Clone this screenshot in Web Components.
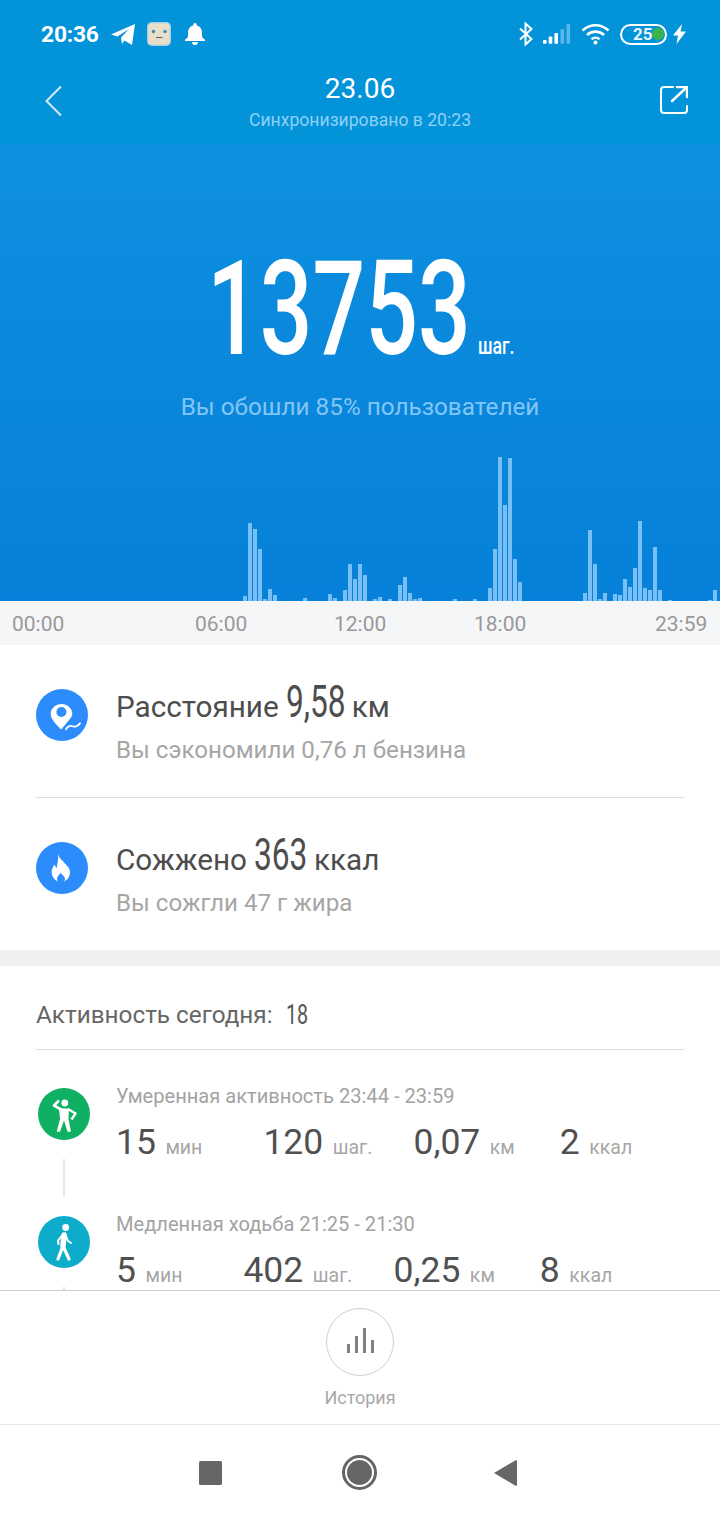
<!DOCTYPE html>
<html lang="ru"><head><meta charset="utf-8"><title>Шаги</title>
<style>
html,body{margin:0;padding:0;background:#fff}
body{width:720px;height:1520px;overflow:hidden;font-family:Roboto,"Noto Sans",sans-serif;display:flex;flex-direction:column}
</style></head><body>
<app-top></app-top>
<steps-hero value="13753" unit="шаг.">Вы обошли 85% пользователей</steps-hero>
<time-axis></time-axis>
<detail-list>
  <summary-row icon="pin" value="9,58" vw="58" label="Расстояние" unit="км" sub="Вы сэкономили 0,76 л бензина"></summary-row>
  <summary-row icon="fire" value="363" vw="52" label="Сожжено" unit="ккал" sub="Вы сожгли 47 г жира" last></summary-row>
  <activity-head count="18">Активность сегодня:</activity-head>
  <activity-item kind="mod" label="Умеренная активность 23:44 - 23:59" vals="15|120|0,07|2"></activity-item>
  <activity-item kind="walk" stub label="Медленная ходьба 21:25 - 21:30" vals="5|402|0,25|8"></activity-item>
</detail-list>
<history-bar></history-bar>
<nav-bar></nav-bar>
<script>
function def(name, css, html, init){
  customElements.define(name, class extends HTMLElement{
    connectedCallback(){
      if(this.shadowRoot) return;
      const r=this.attachShadow({mode:'open'});
      r.innerHTML='<style>'+css+'</style>'+(typeof html==='function'?html(this):html);
      if(init) init(r,this);
    }
  });
}
def('cond-num',
 ':host{display:inline-block;white-space:nowrap;vertical-align:baseline;font-family:Roboto,sans-serif;font-weight:500}span{display:inline-block;transform-origin:0 50%;transform:scaleX(var(--sx,.7))}',
 '<span><slot></slot></span>');

def('app-top',
 `:host{display:block;height:145px;background:#0293d9;color:#fff;flex:none}
  .st{height:68px;display:flex;align-items:center;padding:0 34px 0 41px;box-sizing:border-box}
  .t{font-size:22.800px;font-weight:700;width:70px;letter-spacing:-.2px}
  svg{display:block;flex:none}
  .sp{flex:1}
  .h{display:grid;grid-template-columns:1fr auto 1fr;align-items:start;padding:0 32px}
  .c{text-align:center}
  .d{font-size:28px;line-height:34px;margin-top:4px}
  .s{font-size:17.600px;line-height:22px;color:#8ed0f6;margin-top:3px}
  .b{margin:17px 0 0 13px}.e{justify-self:end;margin-top:18px}`,
 `<div class="st"><span class="t">20:36</span>
  <svg width="24" height="21" viewBox="0 0 24 21"><path d="M0 10.500 24 0 21 21 13.500 16.500 11 20 10 13.500 18 5 6.500 12.500Z" fill="#fff"/></svg>
  <svg style="margin-left:12px" width="24" height="24" viewBox="0 0 24 24"><rect x=".7" y=".7" width="22.600" height="22.600" rx="4" fill="#e9dfc8" stroke="#a9d2e6" stroke-width="1.400"/><circle cx="6.500" cy="9.500" r="1.700" fill="#2b8fc7"/><circle cx="18" cy="9.500" r="1.700" fill="#2b8fc7"/><path d="M9 15.500h6.500" stroke="#58707a" stroke-width="1.200"/></svg>
  <svg style="margin-left:14px" width="20" height="23" viewBox="0 0 20 23"><path d="M10 0a1.800 1.800 0 0 1 1.800 1.800v.6c3.600.9 5.200 3.800 5.200 7.200v3.400c0 1.400 1 2.400 3 3.600v1.400H0v-1.400c2-1.200 3-2.200 3-3.600V9.600c0-3.400 1.600-6.300 5.200-7.200v-.6A1.800 1.800 0 0 1 10 0ZM7 19h6a3 3 0 0 1-6 0Z" fill="#fff"/></svg>
  <span class="sp"></span>
  <svg width="16" height="24" viewBox="0 0 16 24"><path d="M2 6.500 13.500 17 7.500 22.500V1.500L13.500 7 2 17.500" fill="none" stroke="#fff" stroke-width="2"/></svg>
  <svg style="margin-left:9px" width="28" height="20" viewBox="0 0 28 20"><g fill="#fff"><rect y="16" width="3.600" height="3.800" rx=".8"/><rect x="5.700" y="12.500" width="3.600" height="7.300" rx=".8"/><rect x="11.400" y="9" width="3.600" height="10.800" rx=".8"/></g><g fill="#5cb6ec"><rect x="17.500" y="5" width="3.600" height="14.800" rx=".8"/><rect x="23.500" y="0" width="3.600" height="19.800" rx=".8"/></g></svg>
  <svg style="margin-left:10px" width="29" height="22" viewBox="0 0 29 22"><g fill="none" stroke="#fff" stroke-width="2.600"><path d="M1.500 7.500C9 .5 20 .5 27.500 7.500"/><path d="M6 12C10.800 7.500 18.200 7.500 23 12"/><path d="M10.500 16.200c2.300-2 5.700-2 8 0"/></g><circle cx="14.500" cy="19.500" r="2" fill="#fff"/></svg>
  <span style="margin-left:10px;width:47px;height:21px;box-sizing:border-box;border:2px solid #fff;border-radius:11px;position:relative;display:flex;align-items:center;flex:none;overflow:hidden"><i style="position:absolute;right:1px;top:2.500px;width:12px;height:12px;border-radius:50%;background:#3bb54a"></i><b style="position:relative;font-size:17px;line-height:17px;margin-left:11px;font-weight:700;color:#e9f6fd">25</b></span>
  <svg style="margin-left:6px" width="13" height="20" viewBox="0 0 13 20"><path d="M9 0 0 11.500h5L3.500 20 13 7.500H7.500Z" fill="#fff"/></svg>
 </div>
 <div class="h">
  <svg class="b" width="18" height="32" viewBox="0 0 18 32"><path d="M16 1.500 1.500 16 16 30.500" fill="none" stroke="#d3ecfa" stroke-width="2"/></svg>
  <div class="c"><div class="d">23.06</div><div class="s">Синхронизировано в 20:23</div></div>
  <svg class="e" width="28" height="28" viewBox="0 0 28 28"><path d="M13 1H4a3 3 0 0 0-3 3v20a3 3 0 0 0 3 3h20a3 3 0 0 0 3-3v-4" fill="none" stroke="#fff" stroke-width="2" stroke-linecap="round"/><path d="M12 15 26.500 1.500M17 1h10v10" fill="none" stroke="#fff" stroke-width="2.400" stroke-linecap="round"/></svg>
 </div>`);

def('steps-hero',
 `:host{display:block;height:456px;flex:none;background:linear-gradient(#0e90e0,#0680d8);color:#fff;box-sizing:border-box;padding-top:98px;overflow:hidden;position:relative}
  .n{display:flex;align-items:baseline;padding-left:207px;height:132px}
  .big{font-size:132px;line-height:132px;width:271px;--sx:.703;font-weight:500}
  .u{font-size:24px;line-height:24px;width:35px;--sx:.74}
  .s{margin-top:16px;text-align:center;font-size:24.300px;line-height:32px;color:#82c6f6}`,
 h=>`<div class="n"><cond-num class="big">${h.getAttribute('value')}</cond-num><cond-num class="u">${h.getAttribute('unit')}</cond-num></div>
 <div class="s"><slot></slot></div><step-chart></step-chart>`);

def('step-chart',
 `:host{display:flex;position:absolute;left:0;right:0;bottom:0;height:150px;align-items:flex-end;gap:1px;padding-left:3px;box-sizing:border-box;overflow:hidden}
  i{display:block;flex:none;width:4px;background:#78bff5}`,
 '', r=>{
  const d={243:5,248:78,253:72,258:52,263:2,268:12,273:6,303:3,328:7,333:3,343:11,348:37,353:22,358:37,363:26,373:2,378:4,388:2,398:16,403:24,408:8,413:2,418:3,453:2,473:2,488:13,493:52,498:144,503:96,508:143,513:42,518:19,583:8,588:71,593:37,598:2,603:8,613:7,618:6,623:22,628:14,633:33,638:80,643:13,648:11,653:54,658:11,668:1,708:1,713:11};
  for(let x=3;x<720;x+=5){const b=document.createElement('i');b.style.height=(d[x]||0)+'px';r.appendChild(b);}
 });

def('time-axis',
 `:host{display:flex;flex:none;height:44px;box-sizing:border-box;padding:1px 0 0 12px;background:#f5f6f8;align-items:center;color:#999;font-size:21px}
  span{display:block;width:53px;white-space:nowrap}`,
 `<span>00:00</span><span style="margin-left:130px">06:00</span><span style="margin-left:86px">12:00</span><span style="margin-left:87px">18:00</span><span style="margin-left:128px">23:59</span>`);

def('detail-list',
 `:host{display:block;flex:1;min-height:0;background:#fff}`,
 '<slot></slot>');

const ICONS={
 pin:`<circle cx="26" cy="26" r="26" fill="#2d8cfb"/><path d="M25.500 15c-6 0-10.800 4.500-10.800 10 0 5.500 6 10.800 10.300 15.500 1.700-1.800 3.700-4 5.500-6.500 3-3.500 5.800-6.500 5.800-9 0-5.500-4.800-10-10.800-10Z" fill="#fff"/><circle cx="25.400" cy="23" r="5" fill="#2d8cfb"/><path d="M30 40.300c2-3.800 5-3.800 7-3s4.500.5 7-3" fill="none" stroke="#2d8cfb" stroke-width="4"/><path d="M30 40.300c2-3.800 5-3.800 7-3s4.500.5 7-3" fill="none" stroke="#fff" stroke-width="1.800" stroke-linecap="round"/>`,
 fire:`<circle cx="26" cy="26" r="26" fill="#2d8cfb"/><path d="M22 12c1 4 4 6 7 9.500 3 3 5 5.500 5 9 0 5-4 9.500-9 9.500s-9.300-4.500-9.300-10c0-3 1.300-5.500 3-7.500.3 1.700 1 2.800 2.200 3.300C21 21.500 23 17 22 12Z" fill="#fff"/><path d="M24.700 31c-2 2-3.700 3.700-3.700 6 0 1.500.8 2.500 2 3.300h3.800c1.500-.7 2.200-2 2.200-3.300 0-2.300-2.500-4-4.300-6Z" fill="#2d8cfb"/>`,
 mod:`<circle cx="26" cy="26" r="26" fill="#10b064"/><circle cx="26.800" cy="15" r="3.400" fill="#fff"/><path d="M21 20.500h10l-.5 10.500 2.500 12.700h-3.500L26 32.500 22 43.700h-3.300L22 31Z" fill="#fff"/><path d="M24 22 16 17.500l5-5" fill="none" stroke="#fff" stroke-width="2.600" stroke-linejoin="round"/><path d="M30 21l7.500 4.500-4 6" fill="none" stroke="#fff" stroke-width="2.400" stroke-linejoin="round"/>`,
 walk:`<circle cx="26" cy="26" r="26" fill="#0eaccb"/><circle cx="27.700" cy="11.500" r="3.400" fill="#fff"/><path d="M26 19 25 30" stroke="#fff" stroke-width="5.500" stroke-linecap="round"/><path d="M25 30 20 43M25.500 31 31 43" fill="none" stroke="#fff" stroke-width="3.200" stroke-linecap="round"/><path d="M24 19.500 20 24.500 20.500 28M28 20l2 5 3 2" fill="none" stroke="#fff" stroke-width="2" stroke-linecap="round" stroke-linejoin="round"/>`
};
def('summary-row',
 `:host{display:block;padding:0 36px}
  .w{display:grid;grid-template-columns:80px 1fr;height:153px;box-sizing:border-box;padding-top:44px;border-bottom:1px solid #dcdcdc}
  :host([last]) .w{border-bottom:0;height:152px}
  svg{display:block}
  .m{font-size:29.700px;line-height:36px;color:#4d4d4d;display:flex;align-items:baseline;white-space:nowrap;margin-top:-5px}
  .v{font-size:44px;line-height:36px;margin:0 8px 0 7px;--sx:.72;font-weight:450}
  .s{font-size:24.150px;line-height:30px;color:#a6a6a6;margin-top:10px;white-space:nowrap}`,
 h=>`<div class="w"><svg width="52" height="52" viewBox="0 0 52 52">${ICONS[h.getAttribute('icon')]}</svg>
  <div><div class="m"><span>${h.getAttribute('label')}</span><cond-num class="v" style="width:${h.getAttribute('vw')}px">${h.getAttribute('value')}</cond-num><span>${h.getAttribute('unit')}</span></div>
  <div class="s">${h.getAttribute('sub')}</div></div></div>`);

def('activity-head',
 `:host{display:block;border-top:16px solid #eef0f1;padding:0 36px 38px}
  .w{height:84px;box-sizing:border-box;border-bottom:1px solid #dedede;display:flex;align-items:center;font-size:24.300px;color:#666;padding-top:14px}
  .n{font-size:28px;line-height:30px;width:21px;margin-left:13px;--sx:.7;color:#555;font-weight:450}`,
 h=>`<div class="w"><span><slot></slot></span><cond-num class="n">${h.getAttribute('count')}</cond-num></div>`);

def('activity-item',
 `:host{display:grid;grid-template-columns:78px 1fr;padding-left:38px;box-sizing:border-box}
  .l{display:flex;flex-direction:column;width:52px}
  svg{display:block;flex:none}
  .c{width:2px;height:38px;background:#e6e6e6;margin:19px 0 19px 25px}
  :host([stub]) .c{height:3px;margin-bottom:0}
  .lb{font-size:20.100px;line-height:24px;color:#a3a3a3;margin-top:-4px;white-space:nowrap}
  .r{display:flex;align-items:baseline;margin-top:16px;white-space:nowrap;height:36px}
  .v{font-size:35.500px;line-height:36px;color:#505050}
  .u{font-size:19.500px;line-height:24px;color:#a6a6a6;margin-left:9.500px}`,
 h=>{const v=h.getAttribute('vals').split('|');const u=['мин','шаг.','км','ккал'];const g=[0,61,41,45];
  return `<div class="l"><svg width="52" height="52" viewBox="0 0 52 52">${ICONS[h.getAttribute('kind')]}</svg><div class="c"></div></div>
  <div><div class="lb">${h.getAttribute('label')}</div><div class="r">${v.map((x,i)=>`<span class="v" style="margin-left:${g[i]}px">${x}</span><span class="u">${u[i]}</span>`).join('')}</div></div>`});

def('history-bar',
 `:host{display:flex;flex:none;flex-direction:column;align-items:center;height:135px;box-sizing:border-box;border-top:1px solid #cfcfcf;border-bottom:1px solid #e6e6e6;background:#fff;padding-top:17px}
  .o{width:68px;height:68px;box-sizing:border-box;border:1px solid #cfcfcf;border-radius:50%;display:flex;align-items:flex-end;justify-content:center;gap:5px;padding-bottom:22px}
  i{display:block;width:3px;background:#808080}
  span{font-size:18px;line-height:22px;color:#a8a8a8;margin-top:11px}`,
 `<div class="o"><i style="height:9px"></i><i style="height:17px"></i><i style="height:25px"></i><i style="height:13px"></i></div><span>История</span>`);

def('nav-bar',
 `:host{display:flex;flex:none;height:95px;background:#fff;align-items:center;padding:0 0 0 199px;box-sizing:border-box}
  svg{display:block;flex:none}`,
 `<svg width="23" height="24" viewBox="0 0 23 24"><rect width="23" height="24" rx="1.500" fill="#666"/></svg>
  <svg style="margin-left:120px" width="35" height="35" viewBox="0 0 35 35"><circle cx="17.500" cy="17.500" r="16" fill="none" stroke="#666" stroke-width="3"/><circle cx="17.500" cy="17.500" r="12.500" fill="#666"/></svg>
  <svg style="margin-left:117px" width="23" height="26" viewBox="0 0 23 26"><path d="M0 13 21.500.3c.8-.4 1.500 0 1.500.8v23.800c0 .8-.7 1.200-1.500.8Z" fill="#666"/></svg>`);
</script>
</body></html>
